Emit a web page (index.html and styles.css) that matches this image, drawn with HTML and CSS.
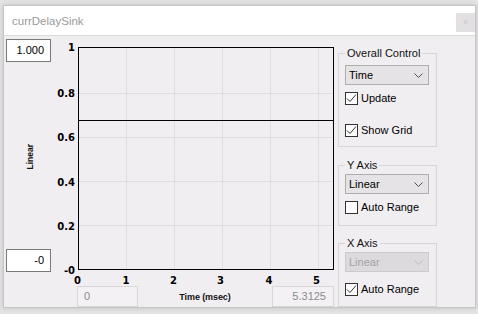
FILE: index.html
```html
<!DOCTYPE html>
<html>
<head>
<meta charset="utf-8">
<link rel="stylesheet" href="styles.css">
</head>
<body>
<div class="window">
  <div class="titlebar">
    <span class="title">currDelaySink</span>
    <span class="close">×</span>
  </div>
  <div class="content">
    <div class="leftcol">
      <div class="numbox top">1.000</div>
      <div class="ylabel-wrap"><span class="ylabel">Linear</span></div>
      <div class="numbox bottom">-0</div>
    </div>
    <div class="plotcol">
      <svg class="plot" viewBox="52 36 284 249" width="284" height="249">
        <g class="grid">
          <line x1="126.5" y1="48" x2="126.5" y2="269"/>
          <line x1="174.5" y1="48" x2="174.5" y2="269"/>
          <line x1="222.5" y1="48" x2="222.5" y2="269"/>
          <line x1="270.5" y1="48" x2="270.5" y2="269"/>
          <line x1="318.5" y1="48" x2="318.5" y2="269"/>
          <line x1="79" y1="93.5" x2="333" y2="93.5"/>
          <line x1="79" y1="137.5" x2="333" y2="137.5"/>
          <line x1="79" y1="181.5" x2="333" y2="181.5"/>
          <line x1="79" y1="225.5" x2="333" y2="225.5"/>
        </g>
        <line class="data" x1="79" y1="120.5" x2="333" y2="120.5"/>
        <rect class="frame" x="78.5" y="47.5" width="255" height="222"/>
        <g class="ytick">
          <text x="75" y="51">1</text>
          <text x="75" y="97">0.8</text>
          <text x="75" y="141">0.6</text>
          <text x="75" y="185.5">0.4</text>
          <text x="75" y="230">0.2</text>
          <text x="75" y="274">-0</text>
        </g>
        <g class="xtick">
          <text x="77.5" y="283.5">0</text>
          <text x="126" y="283.5">1</text>
          <text x="173.5" y="283.5">2</text>
          <text x="220.5" y="283.5">3</text>
          <text x="269" y="283.5">4</text>
          <text x="316.5" y="283.5">5</text>
        </g>
      </svg>
      <div class="xrow">
        <div class="rangebox min">0</div>
        <div class="xlabel">Time (msec)</div>
        <div class="rangebox max">5.3125</div>
      </div>
    </div>
    <div class="panel">
      <fieldset class="group g-overall">
        <legend>Overall Control</legend>
        <div class="select s-overall">Time<svg class="chev" width="9" height="5" viewBox="0 0 9 5"><polyline points="0.5,0.5 4.5,4.5 8.5,0.5"/></svg></div>
        <div class="check c-update"><span class="box"><svg width="11" height="11" viewBox="0 0 11 11"><polyline points="1,5.5 4,8.5 10,1.5"/></svg></span>Update</div>
        <div class="check c-grid"><span class="box"><svg width="11" height="11" viewBox="0 0 11 11"><polyline points="1,5.5 4,8.5 10,1.5"/></svg></span>Show Grid</div>
      </fieldset>
      <fieldset class="group g-y">
        <legend>Y Axis</legend>
        <div class="select s-axis">Linear<svg class="chev" width="9" height="5" viewBox="0 0 9 5"><polyline points="0.5,0.5 4.5,4.5 8.5,0.5"/></svg></div>
        <div class="check c-yauto"><span class="box"></span>Auto Range</div>
      </fieldset>
      <fieldset class="group g-x">
        <legend>X Axis</legend>
        <div class="select s-axis disabled">Linear<svg class="chev" width="9" height="5" viewBox="0 0 9 5"><polyline points="0.5,0.5 4.5,4.5 8.5,0.5"/></svg></div>
        <div class="check c-xauto"><span class="box"><svg width="11" height="11" viewBox="0 0 11 11"><polyline points="1,5.5 4,8.5 10,1.5"/></svg></span>Auto Range</div>
      </fieldset>
    </div>
  </div>
</div>
</body>
</html>
```

FILE: styles.css
```css
html, body {
  margin: 0;
  padding: 0;
}
body {
  width: 478px;
  height: 314px;
  overflow: hidden;
  background: #e3e3e3;
  font-family: "Liberation Sans", Arial, sans-serif;
  font-size: 11px;
  color: #000;
}
.window {
  margin: 5px 0 0 3px;
  width: 473px;
  height: 303px;
  box-sizing: border-box;
  border: 1px solid #c6c6c6;
  background: #f1eef1;
  box-shadow: 0 0 5px rgba(0, 0, 0, 0.15);
  display: flex;
  flex-direction: column;
}
.titlebar {
  height: 29px;
  flex: none;
  border-bottom: 1px solid #dadada;
  background: #fff;
  display: flex;
  align-items: flex-start;
}
.title {
  padding: 8px 0 0 8px;
  font-size: 11.5px;
  line-height: 15px;
  color: #9a9a9a;
}
.close {
  margin: 7px 0 0 auto;
  width: 19px;
  height: 19px;
  background: #e3e0e3;
  color: #cdcacd;
  font-size: 10px;
  line-height: 19px;
  text-align: center;
}
.content {
  flex: 1;
  display: flex;
}
.leftcol {
  width: 48px;
  flex: none;
  display: flex;
  flex-direction: column;
  align-items: flex-start;
}
.numbox {
  margin-left: 2px;
  width: 45px;
  height: 23px;
  box-sizing: border-box;
  border: 1px solid #7a7a7a;
  background: #fff;
  text-align: right;
  padding-right: 6px;
  line-height: 20px;
}
.numbox.top {
  margin-top: 3px;
}
.numbox.bottom {
  margin-bottom: 35px;
}
.ylabel-wrap {
  flex: 1;
  align-self: stretch;
  display: flex;
  align-items: center;
  justify-content: center;
  padding: 3px 0 0 4px;
}
.ylabel {
  writing-mode: vertical-rl;
  transform: rotate(180deg);
  font-weight: bold;
  font-size: 8.5px;
  color: #111;
}
.plotcol {
  width: 284px;
  flex: none;
  display: flex;
  flex-direction: column;
}
.plot {
  display: block;
}
.grid line {
  stroke: #dedede;
  stroke-width: 1;
}
.data {
  stroke: #000;
  stroke-width: 1;
}
.frame {
  fill: #fff;
  fill-opacity: 0;
  stroke: #000;
  stroke-width: 1;
}
.ytick text,
.xtick text {
  font-family: "DejaVu Sans", Verdana, sans-serif;
  font-weight: bold;
  font-size: 10px;
  fill: #000;
}
.ytick text {
  text-anchor: end;
}
.xtick text {
  text-anchor: middle;
}
.xrow {
  display: flex;
  align-items: center;
  height: 22px;
}
.rangebox {
  margin-top: 1px;
  height: 21px;
  box-sizing: border-box;
  border: 1px solid #d9d6d9;
  background: #f3f1f3;
  color: #8c8c8c;
  line-height: 19px;
}
.rangebox.min {
  margin-left: 25px;
  width: 61px;
  padding-left: 6px;
}
.rangebox.max {
  width: 62px;
  margin-right: 2px;
  padding-right: 7px;
  text-align: right;
}
.xlabel {
  flex: 1;
  text-align: center;
  font-weight: bold;
  font-size: 9px;
  letter-spacing: -0.1px;
  color: #111;
  padding-top: 1px;
}
.panel {
  flex: 1;
  padding: 10px 0 0 2px;
}
.group {
  width: 99px;
  box-sizing: border-box;
  margin: 0;
  border: 1px solid #d8d5d8;
  padding: 0 6px;
}
.group legend {
  padding: 0 2px;
  font-size: 11px;
  line-height: 14px;
  color: #111;
}
.g-overall {
  padding-bottom: 9px;
}
.g-y {
  margin-top: 11px;
  padding-bottom: 11px;
}
.g-x {
  margin-top: 10px;
  padding-bottom: 10px;
}
.select {
  width: 84px;
  height: 20px;
  box-sizing: border-box;
  border: 1px solid #adadad;
  background: #e5e3e5;
  padding: 0 5px 0 3px;
  line-height: 18px;
  display: flex;
  align-items: center;
}
.select .chev {
  margin-left: auto;
}
.chev polyline {
  fill: none;
  stroke: #505050;
  stroke-width: 1;
}
.s-overall {
  margin-top: 5px;
}
.s-axis {
  margin-top: 2px;
}
.select.disabled {
  background: #dcdadc;
  border-color: #cccacc;
  color: #a3a3a3;
}
.select.disabled .chev polyline {
  stroke: #bdbbbd;
}
.check {
  display: flex;
  align-items: center;
  height: 13px;
  line-height: 13px;
}
.check .box {
  width: 13px;
  height: 13px;
  box-sizing: border-box;
  border: 1px solid #333;
  background: #fff;
  margin-right: 3px;
  display: flex;
  align-items: center;
  justify-content: center;
}
.check .box svg {
  display: block;
}
.check .box polyline {
  fill: none;
  stroke: #333;
  stroke-width: 1;
}
.c-update {
  margin-top: 7px;
}
.c-grid {
  margin-top: 19px;
}
.c-yauto {
  margin-top: 7px;
}
.c-xauto {
  margin-top: 11px;
}
```
